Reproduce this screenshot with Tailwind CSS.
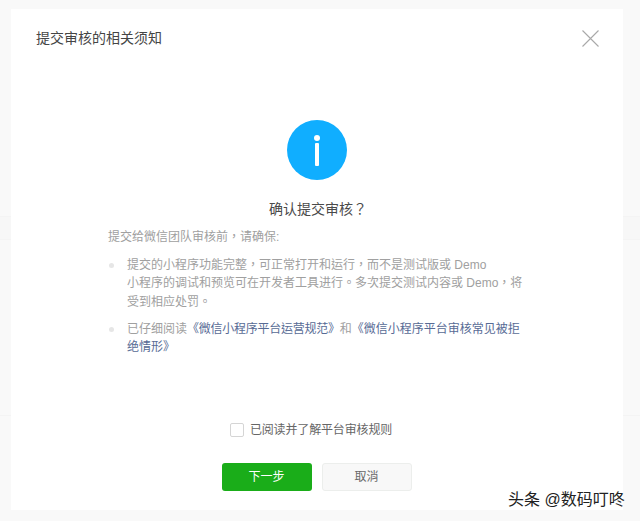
<!doctype html>
<html lang="zh-TW">
<head>
<meta charset="utf-8">
<script src="https://cdn.jsdelivr.net/npm/@tailwindcss/browser@4"></script>
</head>
<body class="relative w-[640px] h-[521px] overflow-hidden bg-[#f9f9f9] font-['Liberation_Sans','Noto_Sans_CJK_TC',sans-serif]">
  <div class="h-[216px]"></div>
  <div class="h-[24px] bg-[#f7f7f7] border-y border-[#f4f4f4]"></div>
  <div class="h-[175px]"></div>
  <div class="border-t border-[#f4f4f4] h-[90px] flex items-end pb-[3px] pl-[13px] text-[12px] leading-[14px] text-[#d0d0d0]">
    <span class="w-[82px]">描述</span><span>当下 在 2018/6/1 下午7:19:55 提交上传</span>
  </div>

  <section class="absolute left-[11px] top-[9px] w-[612px] h-[501px] bg-white flex flex-col">
    <header class="h-[58px] flex items-center justify-between pl-[25px] pr-[24px]">
      <h1 class="text-[14px] leading-[20px] text-[#454545]">提交审核的相关须知</h1>
      <svg class="w-[17px] h-[17px]" viewBox="0 0 17 17" fill="none" stroke="#a9a9a9" stroke-width="1.1"><path d="M.5.5l16 16M16.5.5l-16 16"/></svg>
    </header>
    <div class="flex flex-col items-center pt-[53px]">
      <div class="w-[60px] h-[60px] rounded-full bg-[#10aeff] flex flex-col items-center justify-center gap-[2px]">
        <span class="w-[6px] h-[6px] rounded-full bg-white"></span>
        <span class="w-[4px] h-[23px] rounded-[1px] bg-white"></span>
      </div>
      <h2 class="mt-[17px] pl-[2px] text-[14px] leading-[24px] text-[#4a4a4a]">确认提交审核？</h2>
    </div>
    <div class="pl-[97px] pr-[100px] mt-[7px] text-[12px] leading-[18.5px] text-[#a0a0a0]">
      <p class="mb-[9px]">提交给微信团队审核前，请确保:</p>
      <ul class="flex flex-col gap-[8.5px]">
        <li class="relative pl-[19px]"><span class="absolute left-[1px] top-[7px] w-[5px] h-[5px] rounded-full bg-[#e6e6e6]"></span>提交的小程序功能完整，可正常打开和运行，而不是测试版或 Demo<br>小程序的调试和预览可在开发者工具进行。多次提交测试内容或 Demo，将受到相应处罚。</li>
        <li class="relative pl-[19px]"><span class="absolute left-[1px] top-[7px] w-[5px] h-[5px] rounded-full bg-[#e6e6e6]"></span>已仔细阅读<span class="text-[#576b95] tracking-[-0.25px]">《微信小程序平台运营规范》</span>和<span class="text-[#576b95]">《微信小程序平台审核常见被拒绝情形》</span></li>
      </ul>
    </div>
    <label class="mt-auto flex items-center justify-center gap-[6px] pr-[12px] text-[12px] leading-[18px] tracking-[-0.15px] text-[#666]">
      <span class="w-[14px] h-[14px] border border-[#d5d5d5] rounded-[2px] bg-white"></span>已阅读并了解平台审核规则
    </label>
    <div class="mt-[24px] mb-[19px] flex justify-center gap-[10px] pr-[1px]">
      <button class="w-[90px] h-[28px] rounded-[3px] bg-[#1aad19] text-white text-[12px]">下一步</button>
      <button class="w-[90px] h-[28px] rounded-[3px] bg-[#f8f8f8] border border-[#eceeec] text-[#6a6a6a] text-[12px]">取消</button>
    </div>
  </section>

  <div class="absolute left-[508px] top-[489px] text-[16px] leading-[22px] text-[#222] [text-shadow:0_0_2px_#fff,0_0_2px_#fff]">头条 @数码叮咚</div>
</body>
</html>
